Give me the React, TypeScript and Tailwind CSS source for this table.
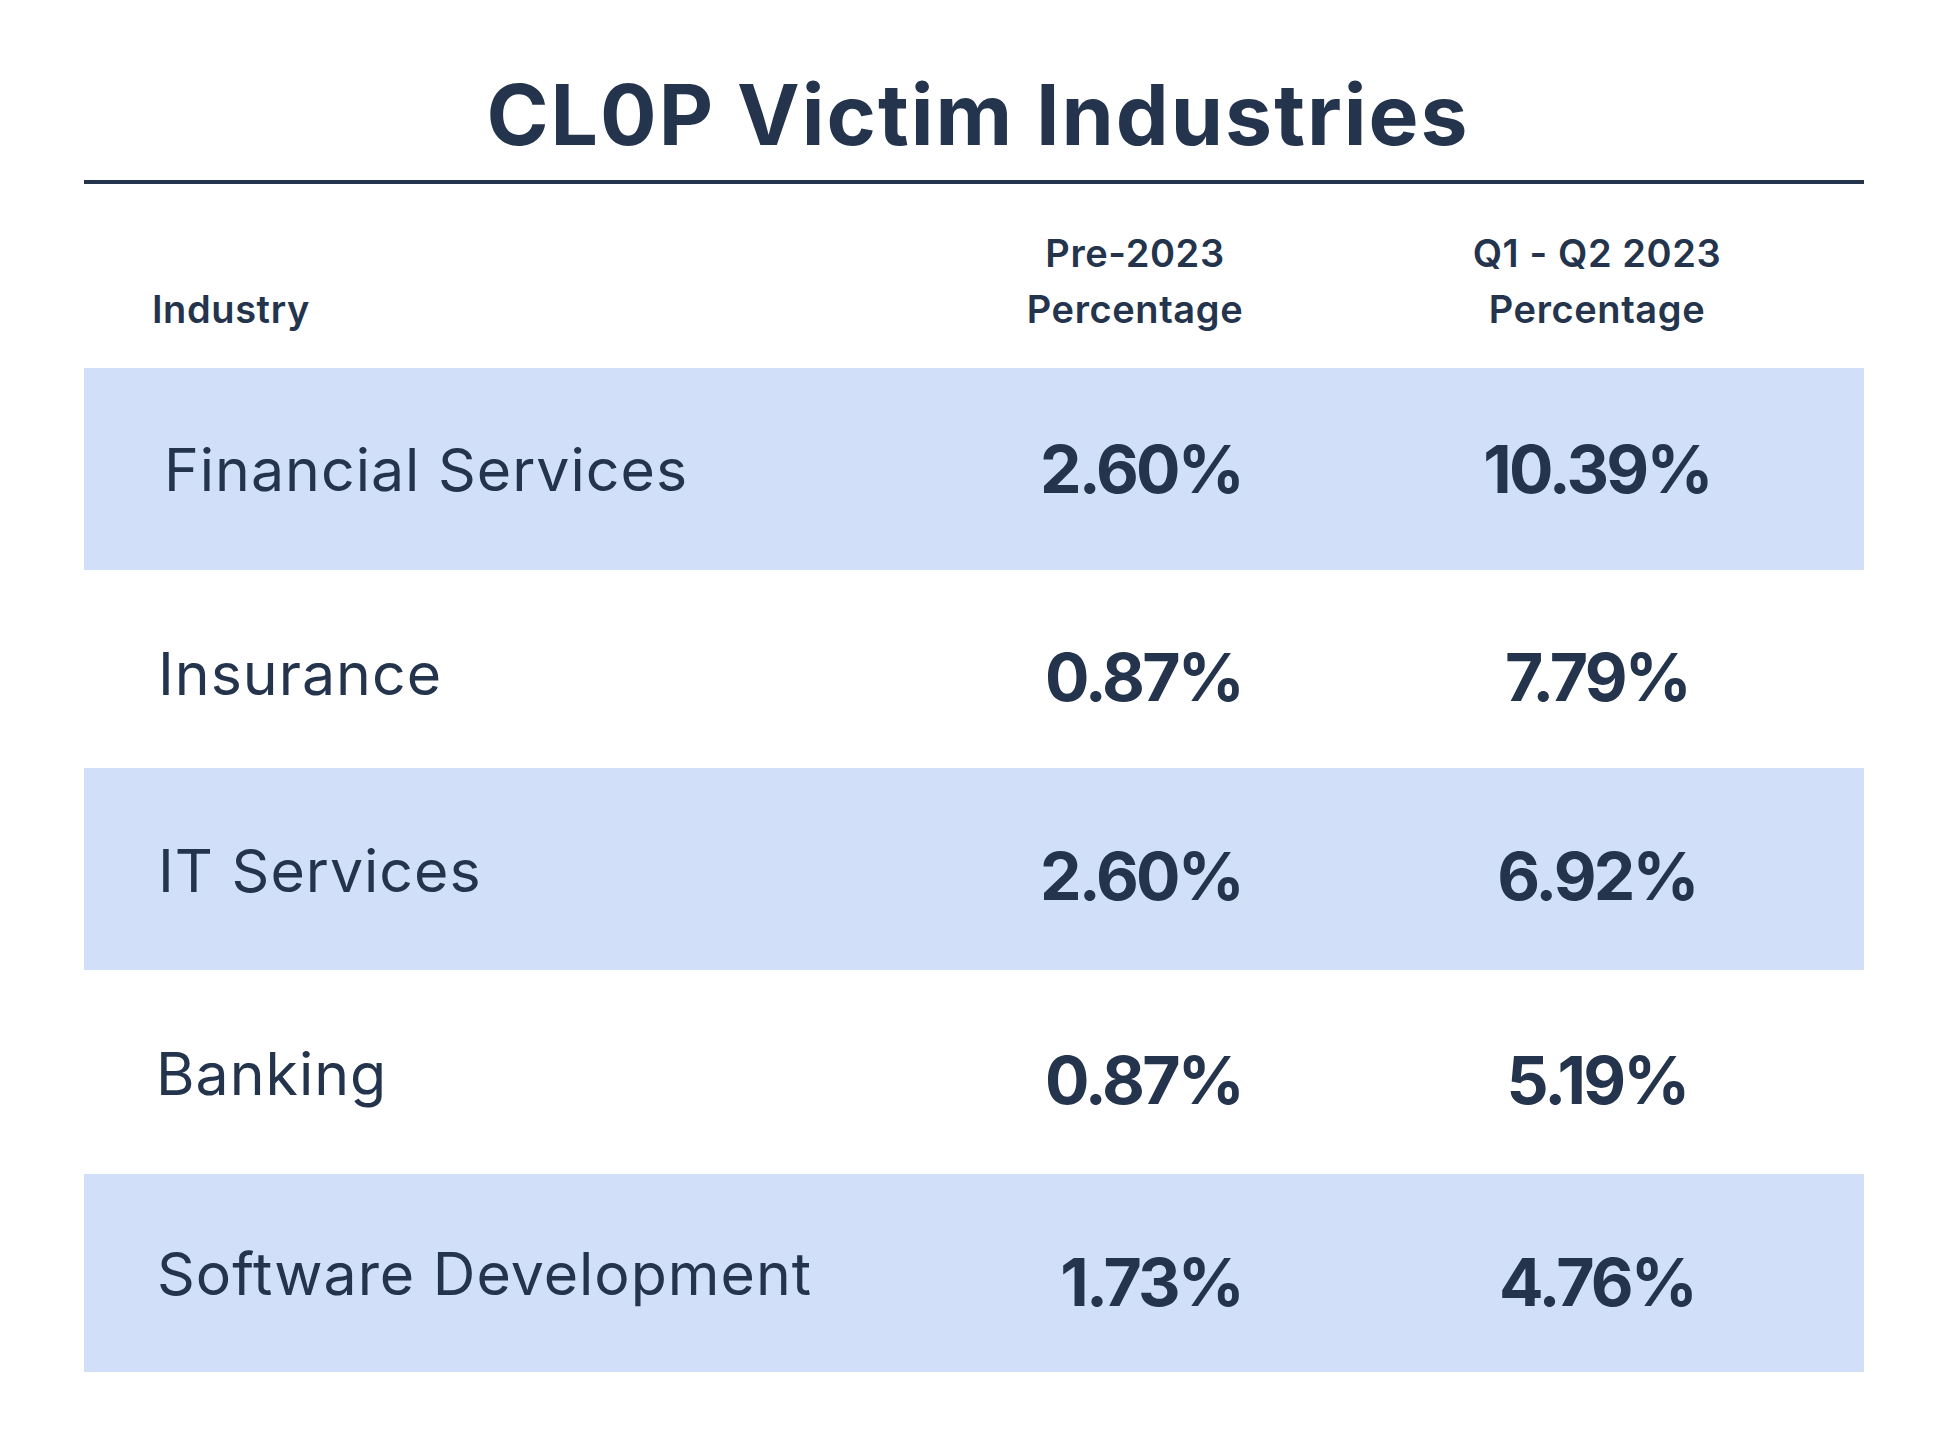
const ROWS = [
  { label: "Financial Services", pre: "2.60%", q: "10.39%", band: true, h: "h-[202px]", lp: "pl-[80px]", lt: "pt-[0px]", nt: "pt-[0px]" },
  { label: "Insurance", pre: "0.87%", q: "7.79%", band: false, h: "h-[198px]", lp: "pl-[74px]", lt: "pt-[8px]", nt: "pt-[16px]" },
  { label: "IT Services", pre: "2.60%", q: "6.92%", band: true, h: "h-[202px]", lp: "pl-[74px]", lt: "pt-[2px]", nt: "pt-[14px]" },
  { label: "Banking", pre: "0.87%", q: "5.19%", band: false, h: "h-[204px]", lp: "pl-[72px]", lt: "pt-[2px]", nt: "pt-[16px]" },
  { label: "Software Development", pre: "1.73%", q: "4.76%", band: true, h: "h-[198px]", lp: "pl-[73px]", lt: "pt-[0px]", nt: "pt-[18px]" },
];

export default function App() {
  return (
    <div className="w-[1956px] h-[1448px] bg-white text-[#24344d] font-['Inter','Liberation_Sans',sans-serif]">
      <h1 className="pt-[73px] text-center text-[84px] leading-[84px] font-bold tracking-[2px]">
        CL0P Victim Industries
      </h1>
      <div className="ml-[84px] mt-[23px] w-[1780px] h-[4px] bg-[#24344d]" />

      <div className="ml-[84px] w-[1780px]">
        {/* header */}
        <div className="h-[184px] pt-[41px]">
          <div className="flex items-end text-[38px] leading-[56px] font-semibold tracking-[0.6px] whitespace-nowrap">
            <div className="w-[901px] shrink-0 pl-[68px]">Industry</div>
            <div className="w-[300px] shrink-0 text-center">
              Pre-2023
              <br />
              Percentage
            </div>
            <div className="ml-[162px] w-[300px] shrink-0 text-center">
              Q1 - Q2 2023
              <br />
              Percentage
            </div>
          </div>
        </div>

        {ROWS.map((r) => (
          <div
            key={r.label}
            className={`flex items-center w-[1780px] ${r.h} ${r.band ? "bg-[#d1e0f8]" : "bg-white"}`}
          >
            <div className={`w-[931px] shrink-0 ${r.lp} ${r.lt} text-[59px] leading-none font-normal tracking-[1px] whitespace-nowrap`}>
              {r.label}
            </div>
            <div className={`w-[240px] shrink-0 ${r.nt} pr-[13px] text-right text-[66px] leading-none font-bold tracking-[-2.8px]`}>
              {r.pre}
            </div>
            <div className={`ml-[222px] w-[240px] shrink-0 ${r.nt} text-center text-[66px] leading-none font-bold tracking-[-2.8px]`}>
              {r.q}
            </div>
          </div>
        ))}
      </div>
    </div>
  );
}
